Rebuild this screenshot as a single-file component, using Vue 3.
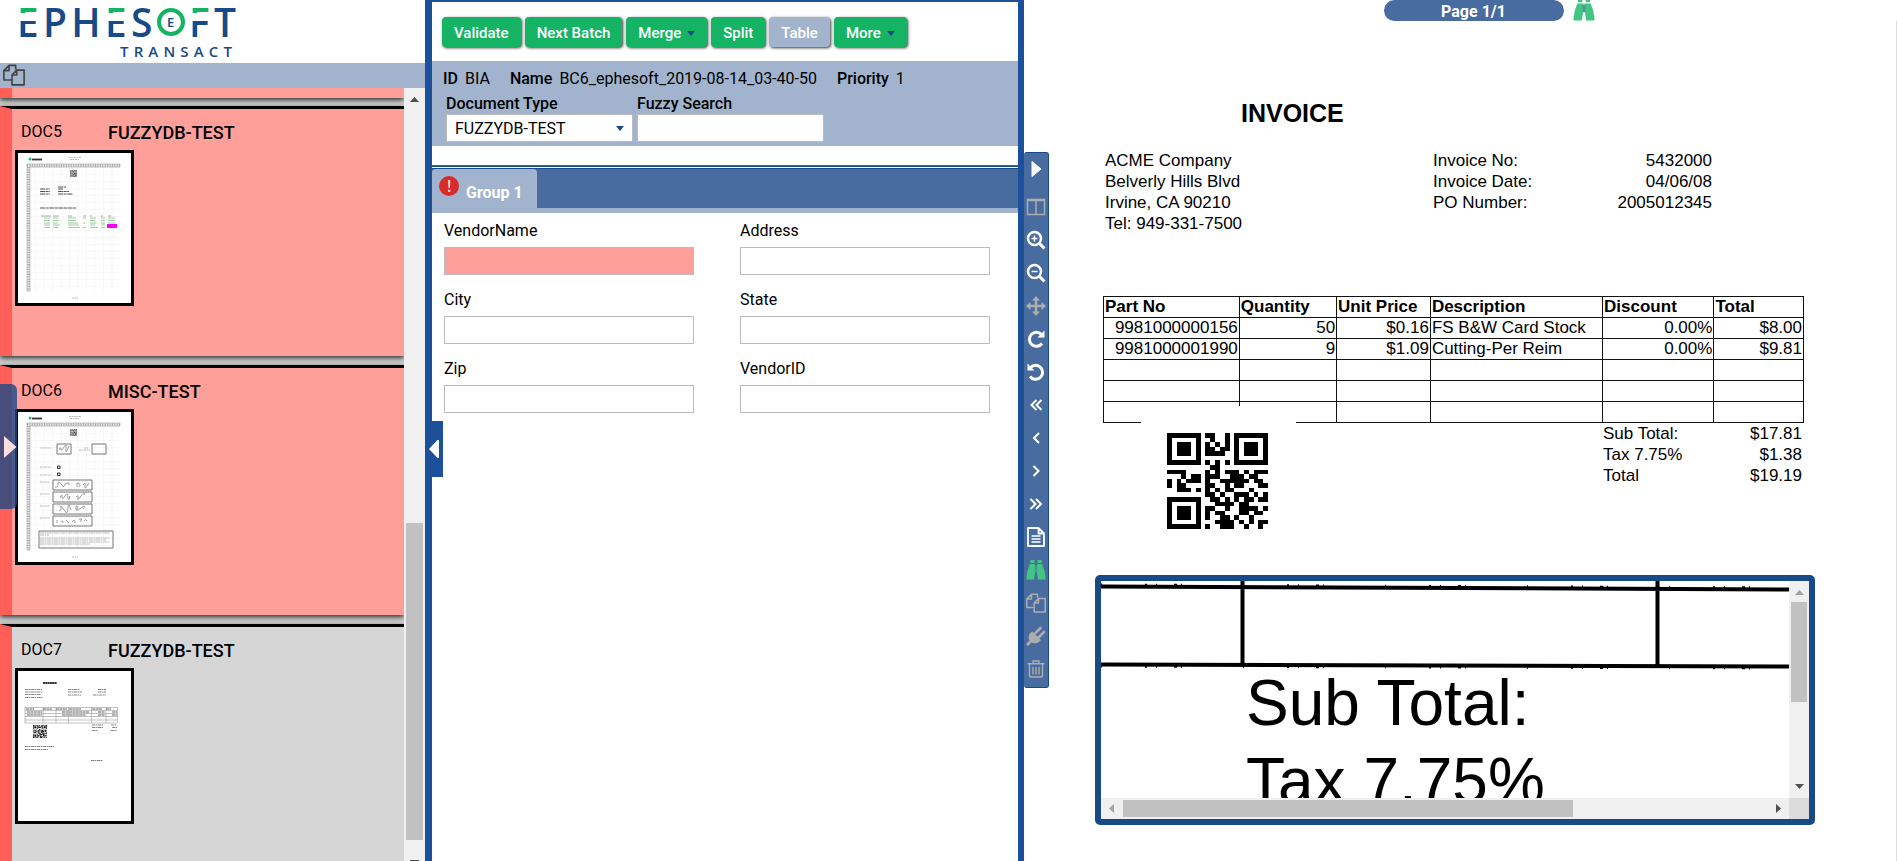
<script setup>
import {ref} from 'vue'

const binoculars = '<path fill="currentColor" stroke="none" d="M4.500 0h4v3h-4zM11.500 0h4v3h-4zM4 4h5v9l-1 6.500H0.500V17Q1 10 4 4zM16 4h-5v9l1 6.500h7.500V17Q19 10 16 4zM9 5.500h2V12H9z"/><path fill="none" stroke="#486c9f" stroke-width="0.600" d="M9.300 4v8M10.700 4v8"/>'
const pages = '<path fill="none" stroke="currentColor" stroke-width="1.500" stroke-linejoin="round" d="M7.500 14.500H0.800V6L5.500 1.200H11.500V5M5.500 1.200V6H0.800M12.500 5.500H19.200V19H8.200V10zM12.500 5.500V10H8.200"/>'

const letters = [
  {char: 'E', split: true},
  {char: 'P'},
  {char: 'H'},
  {char: 'E', split: true},
  {char: 'S'},
  {char: 'E', ring: true},
  {char: 'F', split: true},
  {char: 'T'},
]

const documents = [
  {id: 'DOC5', type: 'FUZZYDB-TEST', thumb: 'grid'},
  {id: 'DOC6', type: 'MISC-TEST', thumb: 'form'},
  {id: 'DOC7', type: 'FUZZYDB-TEST', thumb: 'invoice', current: true},
]

const actions = [
  {label: 'Validate'},
  {label: 'Next Batch'},
  {label: 'Merge', menu: true},
  {label: 'Split'},
  {label: 'Table', disabled: true},
  {label: 'More', menu: true},
]

const fields = ref([
  {name: 'VendorName', value: '', invalid: true},
  {name: 'Address', value: ''},
  {name: 'City', value: ''},
  {name: 'State', value: ''},
  {name: 'Zip', value: ''},
  {name: 'VendorID', value: ''},
])

const documentType = ref('FUZZYDB-TEST')
const fuzzySearch = ref('')

const tools = [
  {name: 'Expand', svg: '<path fill="currentColor" stroke="currentColor" stroke-linejoin="round" d="M6 2.500v15l9-7.500z"/>'},
  {name: 'Split view', muted: true, svg: '<path fill="none" stroke="currentColor" stroke-width="1.500" d="M1.500 2.500h17v15h-17zM10 3v15M1 3.500h18"/>'},
  {name: 'Zoom in', svg: '<circle cx="8.500" cy="8.500" r="6.500" fill="none" stroke="currentColor" stroke-width="2.500"/><path stroke="currentColor" stroke-width="3" d="M13.500 13.500l5 5"/><path stroke="currentColor" stroke-width="1.500" d="M8.500 5.500v6M5.500 8.500h6"/>'},
  {name: 'Zoom out', svg: '<circle cx="8.500" cy="8.500" r="6.500" fill="none" stroke="currentColor" stroke-width="2.500"/><path stroke="currentColor" stroke-width="3" d="M13.500 13.500l5 5"/><path stroke="currentColor" stroke-width="1.500" d="M5.500 8.500h6"/>'},
  {name: 'Fit', muted: true, svg: '<path stroke="currentColor" stroke-width="2.500" d="M10 3v14M3 10h14"/><path fill="currentColor" d="M10 0l4 4.500H6zM10 20l4-4.500H6zM0 10l4.500-4v8zM20 10l-4.500-4v8z"/>'},
  {name: 'Rotate right', svg: '<path fill="none" stroke="currentColor" stroke-width="3" d="M16 14.500A7 7 0 1 1 15.500 5.500"/><path fill="currentColor" d="M18.500 1.500v7h-7z"/>'},
  {name: 'Rotate left', svg: '<path fill="none" stroke="currentColor" stroke-width="3" d="M4 14.500A7 7 0 1 0 4.500 5.500"/><path fill="currentColor" d="M1.500 1.500v7h7z"/>'},
  {name: 'First page', svg: '<path fill="none" stroke="currentColor" stroke-width="2" d="M10.500 5l-5 5 5 5M15.500 5l-5 5 5 5"/>'},
  {name: 'Previous page', svg: '<path fill="none" stroke="currentColor" stroke-width="2" d="M13 5l-5 5 5 5"/>'},
  {name: 'Next page', svg: '<path fill="none" stroke="currentColor" stroke-width="2" d="M7.500 5l5 5-5 5"/>'},
  {name: 'Last page', svg: '<path fill="none" stroke="currentColor" stroke-width="2" d="M4.500 5l5 5-5 5M10 5l5 5-5 5"/>'},
  {name: 'Text', svg: '<path fill="none" stroke="currentColor" stroke-width="1.800" stroke-linejoin="round" d="M2 1h10.500L18 6.500V19H2zM12.500 1v5.500H18"/><path stroke="currentColor" stroke-width="1.600" d="M5.500 9h9M5.500 12h9M5.500 15h9"/>'},
  {name: 'Find', green: true, svg: binoculars},
  {name: 'Copy', muted: true, svg: pages},
  {name: 'Plug', muted: true, svg: '<path fill="currentColor" d="M6.500 5.500l8.500 8.500-1.500 1.500c-2.500 2-5.500 2.500-8 1L2 20 0 18l3.500-3.500c-1.500-2.500-1-5.500 1.200-7.700z"/><path stroke="currentColor" stroke-width="2.600" stroke-linecap="round" d="M9.500 7l5-5M13 11l5-5"/>'},
  {name: 'Delete', muted: true, svg: '<path fill="none" stroke="currentColor" stroke-width="1.400" d="M3.500 5v11.500q0 1.500 1.500 1.500h10q1.500 0 1.500-1.500V5M1.500 4.800h17M7 4.500V2h6v2.500M7 8v7.500M10 8v7.500M13 8v7.500"/>'},
]

const sender = ['ACME Company', 'Belverly Hills Blvd', 'Irvine, CA 90210', 'Tel: 949-331-7500']

const meta = [
  ['Invoice No:', '5432000'],
  ['Invoice Date:', '04/06/08'],
  ['PO Number:', '2005012345'],
]

const headers = ['Part No', 'Quantity', 'Unit Price', 'Description', 'Discount', 'Total']

const lines = [
  ['9981000000156', '50', '$0.16', 'FS B&W Card Stock', '0.00%', '$8.00'],
  ['9981000001990', '9', '$1.09', 'Cutting-Per Reim', '0.00%', '$9.81'],
  ['', '', '', '', '', ''],
  ['', '', '', '', '', ''],
  ['', '', '', '', '', ''],
]

const totals = [
  ['Sub Total:', '$17.81'],
  ['Tax 7.75%', '$1.38'],
  ['Total', '$19.19'],
]

const qrRows = [
  '111111101100101111111',
  '100000100100101000001',
  '101110101010101011101',
  '101110101101101011101',
  '101110101111001011101',
  '100000100000001000001',
  '111111101010101111111',
  '000000000110000000000',
  '111100001010111010111',
  '000101101110011101100',
  '101011101001111110110',
  '101100001100101100011',
  '001110101010110001000',
  '000000001101001110101',
  '111111100110101011011',
  '100000100011110110000',
  '101110101100100111101',
  '101110101011000110110',
  '101110101001101001000',
  '100000100011110101011',
  '111111101001110010010',
]

// one square per dark module
const qrPath = qrRows
  .map((row, y) => [...row].map((bit, x) => (bit === '1' ? `M${x} ${y}h1v1h-1z` : '')).join(''))
  .join('')
</script>

<template>
  <div class="app">
    <aside class="documents">
      <header class="brand">
        <div class="brand-name">
          <span
            v-for="(letter, i) in letters"
            :key="i"
            :class="{split: letter.split, ring: letter.ring}"
          >{{ letter.char }}</span>
        </div>
        <div class="brand-product">
          <span v-for="(char, i) in 'TRANSACT'" :key="i">{{ char }}</span>
        </div>
      </header>
      <div class="documents-bar">
        <button class="icon-button" aria-label="Thumbnails">
          <svg viewBox="0 0 20 20" v-html="pages"/>
        </button>
      </div>
      <div class="documents-body">
        <div class="document-list">
          <div class="document document-tail"></div>
          <article
            v-for="doc in documents"
            :key="doc.id"
            class="document"
            :class="{current: doc.current}"
          >
            <div class="document-title">
              <span class="document-id">{{ doc.id }}</span>
              <span class="document-type">{{ doc.type }}</span>
            </div>
            <svg class="thumb" viewBox="0 0 113 150">
              <defs>
                <pattern id="paper-grid" width="8.500" height="7" patternUnits="userSpaceOnUse">
                  <path d="M0 0H8.500M0 0V7" stroke="#f0f0f0" fill="none"/>
                </pattern>
              </defs>
              <g v-if="doc.thumb !== 'invoice'">
                <rect x="12" y="14" width="90" height="124" fill="url(#paper-grid)"/>
                <circle cx="12" cy="6" r="1.500" fill="#22b573"/>
                <path d="M14 6.500h10" stroke="#333" stroke-width="1.800"/>
                <path d="M51 4.500h12M52 6.500h9M54 145h6" stroke="#bbb" stroke-dasharray="2 0.500"/>
                <path d="M9 12.500h93M10.500 14v124" fill="none" stroke="#aaa" stroke-width="2.500" stroke-dasharray="1 0.700"/>
                <path d="M9 11h93v3H12v124H9z" fill="none" stroke="#888" stroke-width="0.500"/>
                <svg x="52" y="17" width="7" height="7" viewBox="0 0 21 21"><path :d="qrPath" fill="#222"/></svg>
              </g>
              <g v-if="doc.thumb === 'grid'">
                <path d="M22 36h10M22 38.500h10M22 41h10M40 34h8M40 36h5M40 38.500h11M40 41h15M22 55h36" stroke="#555" stroke-width="1.200" stroke-dasharray="5 0.600 3 0.600"/>
                <path d="M23 63h10M35 63h6M50 63h4M65 63h3M72 63h2M83 63h2M90 63h3" stroke="#aaa"/>
                <path d="M26 65h6M35 65h5M50 65h8M65 65h3M72 65h6M83 65h4M90 65h7M26 67.500h6M35 67.500h6M50 67.500h8M72 67.500h5M83 67.500h4M90 67.500h7M26 70h6M35 70h5M50 70h10M65 70h2M72 70h6M83 70h4M90 70h7M26 72h6M35 72h7M50 72h11M72 72h5M83 72h4M26 74.500h6M35 74.500h5M50 74.500h12M65 74.500h3M72 74.500h8M83 74.500h4" stroke="#9ccf9c"/>
                <rect x="89" y="71" width="10" height="4" fill="#f0f"/>
              </g>
              <g v-if="doc.thumb === 'form'">
                <path d="M22 36h11M61 38h11M66 36h4M22 55h11M22 63h11M22 70h10M22 82h10M22 94h10M22 106h10" stroke="#bbb" stroke-dasharray="2 0.500"/>
                <path d="M39 32h14v10H39zM74 32h14v10H74zM35 68h39v10H35zM35 80h39v10H35zM35 92h39v10H35zM35 104h39v10H35zM21 119h74v17H21z" fill="none" stroke="#777"/>
                <path d="M39.500 54h2.500v2.500h-2.500zM39.500 61h2.500v2.500h-2.500z" fill="none" stroke="#333"/>
                <path d="M41 38q2-4 2-1t3-2 2 2 3-3M37 75q3 1 3-3t3 0 3 2 3-3 2 2M59 75v-4q5 1 2 4M65 73q3-4 2 1t4-3M42 86q2-5 2-1t3-1 3 1 2-1M58 85q3-3 2 1t3-2 3-1M41 99q3-1 2-4t3 3 4-2 3 2M58 98v-4q3 0 1 3t4-1 2 1M39 111v-3M43 110q2-3 2 1M48 108l3 3M54 110q3-4 3 1M61 107h3l-2 3M66 109q2-3 3 0" fill="none" stroke="#888" stroke-width="0.800"/>
                <path d="M22 121h70M22 123h9M22 126h70M22 128h66M22 130h70M22 132h50" stroke="#bbb" stroke-dasharray="4 0.500 2 0.500"/>
              </g>
              <g v-if="doc.thumb === 'invoice'">
                <path d="M25 12h14" stroke="#333" stroke-width="2" stroke-dasharray="2 0.300"/>
                <path d="M7 18.500h17M7 21h18M7 23.500h16M7 26.500h18M50 18.500h12M50 21h14M50 24h13M80 18.500h8M80 21h8M75 24h13M74 54h11M93 54h5M74 56.500h11M94 56.500h5M74 59.500h5M93 59.500h6M7 75.500h29M7 78.500h23M73 89.500h12" stroke="#888" stroke-width="1.200" stroke-dasharray="3 0.500 2 0.500"/>
                <path d="M7 36.500h92M7 39.500h92M7 42.500h92M7 45.500h92M7 49h92M7 52h92M7 36v16M25 36v16M38 36v16M50.500 36v16M73.500 36v16M88 36v16M99.500 36v16" fill="none" stroke="#999" stroke-width="0.600"/>
                <path d="M8 38h8M25 38h9M38 38h11M51 38h12M74 38h10M88 38h5M9 41h15M44 41h6M51 41h20M80 41h7M94 41h5M9 44h15M44 44h6M51 44h17M80 44h7M94 44h5" stroke="#666" stroke-width="1.200" stroke-dasharray="3 0.400"/>
                <svg x="15" y="54" width="14" height="13" viewBox="0 0 21 21" preserveAspectRatio="none"><path :d="qrPath"/></svg>
              </g>
            </svg>
          </article>
        </div>
        <div class="scroll-track">
          <svg class="scroll-up" viewBox="0 0 9 5"><path d="M0 5L4.500 0 9 5z" fill="#505050"/></svg>
          <div class="scroll-thumb"></div>
          <svg class="scroll-down" viewBox="0 0 9 1"><path d="M0 0h9v1H0z" fill="#505050"/></svg>
        </div>
      </div>
      <button class="drawer-handle" aria-label="Open drawer">
        <svg viewBox="0 0 14 24"><path d="M1 1v22L13.500 12z" fill="#fde0de"/></svg>
      </button>
    </aside>

    <main class="batch">
      <div class="actions">
        <button
          v-for="action in actions"
          :key="action.label"
          class="action"
          :disabled="action.disabled"
        >
          {{ action.label }}
          <svg v-if="action.menu" class="caret" viewBox="0 0 8 5"><path d="M0 0h8L4 5z"/></svg>
        </button>
      </div>
      <section class="batch-info">
        <div class="batch-facts">
          <span><b>ID</b>BIA</span>
          <span><b>Name</b>BC6_ephesoft_2019-08-14_03-40-50</span>
          <span><b>Priority</b>1</span>
        </div>
        <div class="batch-controls">
          <div class="control">
            <label for="document-type">Document Type</label>
            <div class="select">
              <select id="document-type" v-model="documentType">
                <option>FUZZYDB-TEST</option>
                <option>MISC-TEST</option>
              </select>
              <svg class="caret" viewBox="0 0 8 5"><path d="M0 0h8L4 5z"/></svg>
            </div>
          </div>
          <div class="control">
            <label for="fuzzy-search">Fuzzy Search</label>
            <input id="fuzzy-search" v-model="fuzzySearch" type="text">
          </div>
        </div>
      </section>
      <nav class="tabs">
        <button class="tab">
          <svg class="alert" viewBox="0 0 20 20">
            <circle cx="10" cy="10" r="10" fill="#d92b2b"/>
            <path d="M9 4h2.400l-.5 8H9.500z" fill="#fbd5d5"/>
            <circle cx="10.200" cy="14.800" r="1.300" fill="#fbd5d5"/>
          </svg>
          Group 1
        </button>
      </nav>
      <form class="fields" @submit.prevent>
        <div v-for="field in fields" :key="field.name" class="field">
          <label :for="field.name">{{ field.name }}</label>
          <input :id="field.name" v-model="field.value" type="text" :class="{invalid: field.invalid}">
        </div>
      </form>
      <button class="collapse-handle" aria-label="Collapse">
        <svg viewBox="0 0 10 18"><path d="M10 0v18H8.500L0 9l8.500-9z" fill="#fff"/></svg>
      </button>
    </main>

    <section class="preview">
      <div class="rail">
        <button
          v-for="tool in tools"
          :key="tool.name"
          class="tool"
          :class="{muted: tool.muted, green: tool.green}"
          :aria-label="tool.name"
        >
          <svg viewBox="0 0 20 20" v-html="tool.svg"/>
        </button>
      </div>
      <div class="viewer">
        <div class="page-bar">
          <span class="page-number">Page 1/1</span>
          <svg class="page-find" viewBox="0 0 20 20" v-html="binoculars"/>
        </div>
        <div class="sheet">
          <div class="invoice">
            <h1>INVOICE</h1>
            <div class="invoice-head">
              <div class="sender">
                <div v-for="line in sender" :key="line">{{ line }}</div>
              </div>
              <dl class="pairs meta">
                <template v-for="[label, value] in meta" :key="label">
                  <dt>{{ label }}</dt>
                  <dd>{{ value }}</dd>
                </template>
              </dl>
            </div>
            <table>
              <colgroup>
                <col class="col-part">
                <col class="col-quantity">
                <col class="col-price">
                <col class="col-description">
                <col class="col-discount">
                <col class="col-total">
              </colgroup>
              <thead>
                <tr>
                  <th v-for="header in headers" :key="header">{{ header }}</th>
                </tr>
              </thead>
              <tbody>
                <tr v-for="(line, i) in lines" :key="i">
                  <td v-for="(cell, j) in line" :key="j" :class="{left: j === 3}">{{ cell }}</td>
                </tr>
              </tbody>
            </table>
            <div class="invoice-foot">
              <svg class="qr" viewBox="0 0 21 21" preserveAspectRatio="none" shape-rendering="crispEdges">
                <path :d="qrPath"/>
              </svg>
              <dl class="pairs totals">
                <template v-for="[label, value] in totals" :key="label">
                  <dt>{{ label }}</dt>
                  <dd>{{ value }}</dd>
                </template>
              </dl>
            </div>
          </div>
          <div class="magnifier">
            <div class="magnified">
              <svg class="rules" viewBox="0 0 688 217" preserveAspectRatio="none">
                <path d="M0 5.500L688 8.500M0 83.500L688 85.500M141.500 0V84M556.500 0V85" fill="none" stroke="#000" stroke-width="4"/>
                <path d="M0 3.500L688 6.500M0 85.500L688 87.500" fill="none" stroke="#000" stroke-width="2" stroke-dasharray="1 43 2 9 1 17 3 4 1 61"/>
              </svg>
              <div class="magnified-text">
                <div>Sub Total:</div>
                <div>Tax 7.75%</div>
              </div>
            </div>
            <div class="bar-vertical">
              <svg class="scroll-up" viewBox="0 0 9 5"><path d="M0 5L4.500 0 9 5z" fill="#a3a3a3"/></svg>
              <div class="bar-thumb"></div>
              <svg class="scroll-down" viewBox="0 0 9 5"><path d="M0 0L4.500 5 9 0z" fill="#505050"/></svg>
            </div>
            <div class="bar-horizontal">
              <svg viewBox="0 0 5 9"><path d="M5 0L0 4.500 5 9z" fill="#a3a3a3"/></svg>
              <div class="bar-thumb"></div>
              <svg viewBox="0 0 5 9"><path d="M0 0l5 4.500L0 9z" fill="#505050"/></svg>
            </div>
            <div class="bar-corner"></div>
          </div>
        </div>
      </div>
    </section>
  </div>
</template>

<style>
body {
  margin: 0;
  overflow: hidden;
}
</style>

<style scoped>
.app {
  display: grid;
  grid-template-columns: 425fr 599fr 873fr;
  height: 100vh;
  overflow: hidden;
  background: #fff;
  color: #000;
  font-family: Roboto, "Liberation Sans", sans-serif;
  font-size: 16px;
  line-height: 20px;
}

.app * {
  box-sizing: border-box;
}

button {
  border: 0;
  padding: 0;
  background: none;
  color: inherit;
  font: inherit;
  cursor: pointer;
}

svg {
  display: block;
}

.documents {
  position: relative;
  display: flex;
  flex-direction: column;
  min-width: 0;
  min-height: 0;
}

.brand {
  width: 240px;
  height: 63px;
  flex: none;
  padding: 7px 4px 0 17px;
  color: #184a87;
  font-family: "Open Sans", sans-serif;
}

.brand-name {
  display: flex;
  justify-content: space-between;
  align-items: center;
  height: 30px;
  font-size: 39px;
  line-height: 30px;
  font-weight: 600;
}

.brand-name .split {
  background: linear-gradient(#14b464 6px, transparent 6px, transparent 14px, #184a87 14px);
  background-clip: text;
  color: transparent;
}

.brand-name .ring {
  width: 28px;
  height: 28px;
  border: 4px solid #14b464;
  border-radius: 50%;
  font-size: 13px;
  line-height: 20px;
  text-align: center;
}

.brand-product {
  display: flex;
  justify-content: space-between;
  margin: 6px 4px 0 103px;
  font-size: 15px;
  line-height: 16px;
  font-weight: 600;
}

.documents-bar {
  flex: none;
  height: 25px;
  padding: 1px 3px;
  background: #a2b4cd;
}

.icon-button svg {
  width: 22px;
  height: 22px;
  color: #444;
}

.documents-body {
  flex: 1;
  display: flex;
  min-height: 0;
}

.document-list {
  flex: 1;
  min-width: 0;
  overflow: hidden;
  background: #d0d0d0;
}

.document {
  height: 250px;
  margin-bottom: 9px;
  padding: 15px 9px 0 3px;
  border-top: 3px solid #000;
  border-left: 12px solid #ff5f57;
  background: #ff9f99;
  box-shadow: 0 2px 5px rgba(0, 0, 0, 0.8);
}

.document-tail {
  height: 10px;
  margin-bottom: 8px;
  padding: 0;
  border-top: 0;
}

.document.current {
  background: #d6d6d6;
}

.document-title {
  display: flex;
  padding-left: 6px;
}

.document-id {
  width: 87px;
  line-height: 16px;
}

.document-type {
  font-size: 18px;
  font-weight: 500;
  line-height: 18px;
}

.thumb {
  width: 119px;
  height: 156px;
  margin-top: 8px;
  border: 3px solid #000;
  background: #fff;
}

.scroll-track {
  display: flex;
  flex-direction: column;
  align-items: center;
  width: 21px;
  padding: 9px 0 0;
  background: #f0f0f0;
}

.scroll-up,
.scroll-down {
  width: 9px;
  height: 5px;
  flex: none;
}

.scroll-track .scroll-thumb {
  width: 17px;
  height: 317px;
  margin: auto 0 20px;
  background: #c1c1c1;
}

.scroll-track .scroll-down {
  height: 1px;
}

.drawer-handle {
  position: absolute;
  left: 0;
  top: 384px;
  width: 17px;
  height: 125px;
  border-radius: 0 6px 6px 0;
  background: rgba(26, 72, 132, 0.8);
}

.drawer-handle svg {
  width: 14px;
  height: 24px;
  margin-left: 3px;
}

.batch {
  position: relative;
  min-width: 0;
  border: solid #1c509a;
  border-width: 2px 6px 0 7px;
}

.actions {
  display: flex;
  gap: 4px;
  height: 59px;
  padding: 15px 10px 0;
}

.action {
  display: flex;
  align-items: center;
  gap: 6px;
  height: 30px;
  padding: 2px 12px 0;
  border-radius: 4px;
  background: #14b464;
  box-shadow: 1px 1px 3px rgba(0, 0, 0, 0.8);
  color: #fff;
  font-size: 15px;
  font-weight: 500;
}

.action:disabled {
  background: #a2b4cd;
}

.caret {
  width: 8px;
  height: 5px;
  fill: #184a87;
}

.batch-info {
  height: 85px;
  padding: 8px 11px 0;
  background: #a2b4cd;
}

.batch-facts {
  display: flex;
  gap: 20px;
}

.batch-facts span {
  display: flex;
  gap: 7px;
  white-space: nowrap;
}

.batch-facts b,
.control label {
  font-weight: 500;
}

.batch-controls {
  display: flex;
  gap: 4px;
  padding: 5px 3px 0;
}

.control {
  display: flex;
  flex-direction: column;
  width: 187px;
}

.select {
  position: relative;
}

.select .caret {
  position: absolute;
  right: 9px;
  top: 12px;
}

select,
input {
  display: block;
  width: 100%;
  height: 28px;
  margin: 0;
  padding: 1px 8px 0;
  border: 1px solid #bbb;
  border-radius: 0;
  background: #fff;
  color: #000;
  font: inherit;
}

select {
  appearance: none;
}

.tabs {
  display: flex;
  height: 48px;
  margin-top: 19px;
  border-top: 1px solid #1c6fb8;
  border-bottom: 5px solid #a2b4cd;
  background: linear-gradient(#184a87 1px, #fff 1px, #fff 2px, #184a87 2px, #184a87 3px, #486c9f 3px);
}

.tab {
  display: flex;
  gap: 7px;
  height: 39px;
  margin-top: 3px;
  padding: 7px 14px 0 7px;
  border-radius: 4px 4px 0 0;
  background: #a2b4cd;
  color: #fff;
  font-weight: 700;
  line-height: 34px;
}

.alert {
  width: 20px;
  height: 20px;
}

.fields {
  display: grid;
  grid-template-columns: 1fr 1fr;
  gap: 13px 46px;
  padding: 8px 28px 0 12px;
}

.field label {
  display: block;
  margin-bottom: 6px;
}

.field {
  height: 56px;
}

.field input.invalid {
  background: #ff9f99;
}

.collapse-handle {
  position: absolute;
  left: -3px;
  top: 419px;
  width: 14px;
  height: 56px;
  background: #1c509a;
}

.collapse-handle svg {
  width: 10px;
  height: 18px;
}

.preview {
  display: flex;
  align-items: flex-start;
  min-width: 0;
}

.rail {
  display: flex;
  flex-direction: column;
  flex: none;
  width: 25px;
  margin-top: 152px;
  padding-bottom: 2px;
  border: 1px solid #184a87;
  border-left: 0;
  border-radius: 3px;
  background: #486c9f;
}

.tool {
  display: flex;
  align-items: center;
  justify-content: center;
  height: 33px;
  color: #fff;
}

.tool:first-child {
  height: 37px;
  padding-bottom: 6px;
}

.tool svg {
  width: 20px;
  height: 20px;
}

.tool.muted {
  color: #adadad;
}

.tool.green,
.page-find {
  color: #42c582;
}

.viewer {
  flex: 1;
  min-width: 0;
}

.page-bar {
  display: flex;
  justify-content: center;
  align-items: flex-end;
  gap: 9px;
  height: 21px;
  padding-left: 32px;
}

.page-number {
  width: 180px;
  height: 21px;
  border-radius: 11px;
  background: #486c9f;
  color: #fff;
  font-weight: 700;
  line-height: 24px;
  text-align: center;
}

.page-find {
  width: 22px;
  height: 22px;
}

.sheet {
  height: calc(100vh - 21px);
  padding: 78px 81px 0 46px;
  border-right: 1px solid #ddd;
  font-family: "Liberation Sans", Arial, sans-serif;
  font-size: 17px;
  line-height: 21px;
}

.invoice {
  padding: 0 11px 0 8px;
}

.invoice h1 {
  margin: 0 0 23px 138px;
  font-size: 25px;
  line-height: 28px;
}

.invoice-head {
  display: grid;
  grid-template-columns: 330fr 279fr 92fr;
}

.sender {
  padding-left: 2px;
}

.pairs {
  display: grid;
  grid-template-columns: auto auto;
  align-content: start;
  margin: 0;
}

.pairs dd {
  margin: 0;
  text-align: right;
}

table {
  width: 100%;
  margin-top: 62px;
  border-collapse: collapse;
  table-layout: fixed;
}

.col-part {
  width: 19.4%;
}

.col-quantity {
  width: 13.9%;
}

.col-price {
  width: 13.4%;
}

.col-description {
  width: 24.6%;
}

.col-discount {
  width: 15.9%;
}

.col-total {
  width: 12.8%;
}

th,
td {
  height: 21px;
  padding: 0 1px;
  border: 1px solid #111;
  line-height: 20px;
  text-align: right;
  white-space: nowrap;
}

th,
td.left {
  text-align: left;
}

.invoice-foot {
  display: flex;
  justify-content: space-between;
  align-items: flex-start;
}

.qr {
  position: relative;
  width: 155px;
  height: 123px;
  margin: -17px 0 0 38px;
  padding: 27px 28px 0 26px;
  background: #fff;
}

.totals {
  width: 201px;
  padding-right: 2px;
}

.magnifier {
  display: grid;
  grid-template-columns: 1fr 20px;
  grid-template-rows: 217px 21px;
  margin-top: 46px;
  border: 6px solid #184a87;
  border-radius: 5px;
}

.magnified {
  position: relative;
  overflow: hidden;
}

.rules {
  position: absolute;
  inset: 0;
  width: 100%;
  height: 217px;
}

.magnified-text {
  padding: 83px 0 0 145px;
  font-size: 64px;
  line-height: 78px;
  white-space: nowrap;
}

.bar-vertical {
  display: flex;
  flex-direction: column;
  align-items: center;
  padding: 9px 0;
  background: #f0f0f0;
}

.bar-vertical .bar-thumb {
  width: 16px;
  height: 100px;
  margin: 7px 0 auto;
  background: #c1c1c1;
}

.bar-horizontal {
  display: flex;
  align-items: center;
  padding: 0 8px;
  background: #f0f0f0;
}

.bar-horizontal svg {
  width: 5px;
  height: 9px;
}

.bar-horizontal .bar-thumb {
  width: 450px;
  height: 17px;
  margin: 0 auto 0 9px;
  background: #c1c1c1;
}

.bar-corner {
  background: #dcdcdc;
}
</style>
